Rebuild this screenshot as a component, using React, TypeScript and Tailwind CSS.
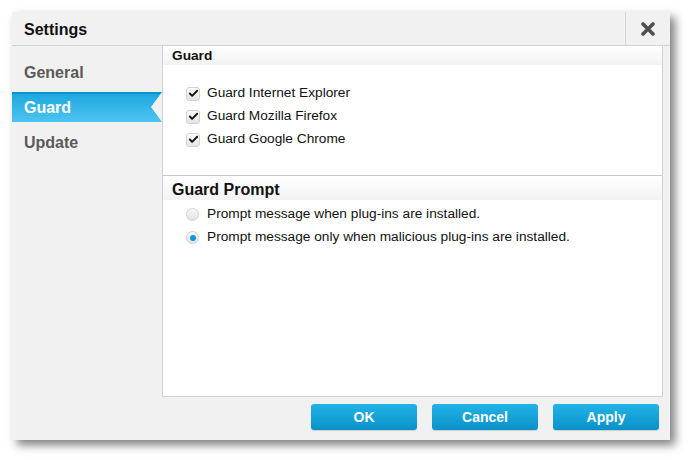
import { Check } from "lucide-react"

const navItems = ["General", "Guard", "Update"]
const browsers = ["Guard Internet Explorer", "Guard Mozilla Firefox", "Guard Google Chrome"]
const prompts = [
  { label: "Prompt message when plug-ins are installed.", checked: false },
  { label: "Prompt message only when malicious plug-ins are installed.", checked: true },
]

function CheckBox() {
  return (
    <span className="flex h-[14px] w-[14px] items-center justify-center rounded-[3px] border border-[#d2d2d2] bg-[linear-gradient(#fafafa,#e4e4e4)]">
      <Check size={11} strokeWidth={4} className="text-[#111]" />
    </span>
  )
}

function Radio({ checked }: { checked: boolean }) {
  return (
    <span className="flex h-[13px] w-[13px] items-center justify-center rounded-full border border-[#d0d0d0] bg-[linear-gradient(#f8f8f8,#e2e2e2)]">
      {checked && <span className="h-[6px] w-[6px] rounded-full bg-[#1592d8]" />}
    </span>
  )
}

function DialogButton({ label }: { label: string }) {
  return (
    <button className="h-[26px] w-[106px] rounded-[3px] bg-[linear-gradient(#22b3e8,#0a92c8)] pt-px text-[14px] font-bold text-white shadow-[0_1px_1px_rgba(0,0,0,0.15)]">
      {label}
    </button>
  )
}

export default function App() {
  return (
    <div className="h-[460px] w-[690px] bg-white pl-[12px] pt-[12px] font-['Liberation_Sans',Arial,sans-serif]">
      <div className="flex h-[428px] w-[658px] flex-col bg-[#f1f1f1] shadow-[5px_5px_9px_rgba(0,0,0,0.5)]">
        <div className="flex h-[34px] items-center border-b border-[#d3d3d3]">
          <div className="flex-1 pl-[12px] pt-[2px] text-[16px] font-bold text-[#111]">Settings</div>
          <div className="flex h-full w-[45px] items-center justify-center border-l border-[#d8d8d8]">
            <svg width="14" height="14" viewBox="0 0 14 14">
              <path d="M2 2L12 12M12 2L2 12" stroke="#505050" strokeWidth="3.6" strokeLinecap="round" />
            </svg>
          </div>
        </div>

        <div className="flex flex-1">
          <div className="flex w-[150px] flex-col gap-[5px] pt-[11px]">
            {navItems.map((item) =>
              item === "Guard" ? (
                <div
                  key={item}
                  className="flex h-[30px] items-center border-t-2 border-[#0a94c9] bg-[linear-gradient(#1ea8df,#4ec4f0)] pl-[12px] text-[16px] font-bold text-white [clip-path:polygon(0_0,100%_0,calc(100%-11px)_50%,100%_100%,0_100%)]"
                >
                  {item}
                </div>
              ) : (
                <div key={item} className="flex h-[30px] items-center pl-[12px] pt-px text-[16px] font-bold text-[#5a5a5a]">
                  {item}
                </div>
              )
            )}
          </div>

          <div className="flex flex-1 flex-col">
            <div className="mr-[7px] flex h-[351px] flex-col border border-[#cdd1d8] border-t-0 bg-white">
              <div className="h-[130px] border-b border-[#c8c8c8]">
                <div className="flex h-[19px] items-center bg-[linear-gradient(#ffffff,#f3f3f3)] pl-[9px] pt-px text-[13.7px] font-bold text-[#111]">
                  Guard
                </div>
                <div className="flex flex-col pl-[23px] pt-[17px]">
                  {browsers.map((b) => (
                    <div key={b} className="flex h-[23px] items-center gap-[7px] text-[13.7px] text-[#111]">
                      <CheckBox />
                      {b}
                    </div>
                  ))}
                </div>
              </div>
              <div>
                <div className="flex h-[24px] items-center bg-[linear-gradient(#ffffff,#f3f3f3)] pl-[9px] pt-[4px] text-[16px] font-bold text-[#111]">
                  Guard Prompt
                </div>
                <div className="flex flex-col pl-[23px] pt-[3px]">
                  {prompts.map((p) => (
                    <div key={p.label} className="flex h-[23px] items-center gap-[8px] text-[13.7px] text-[#111]">
                      <Radio checked={p.checked} />
                      {p.label}
                    </div>
                  ))}
                </div>
              </div>
            </div>
            <div className="flex flex-1 items-start justify-end gap-[15px] pr-[11px] pt-[7px]">
              <DialogButton label="OK" />
              <DialogButton label="Cancel" />
              <DialogButton label="Apply" />
            </div>
          </div>
        </div>
      </div>
    </div>
  )
}
